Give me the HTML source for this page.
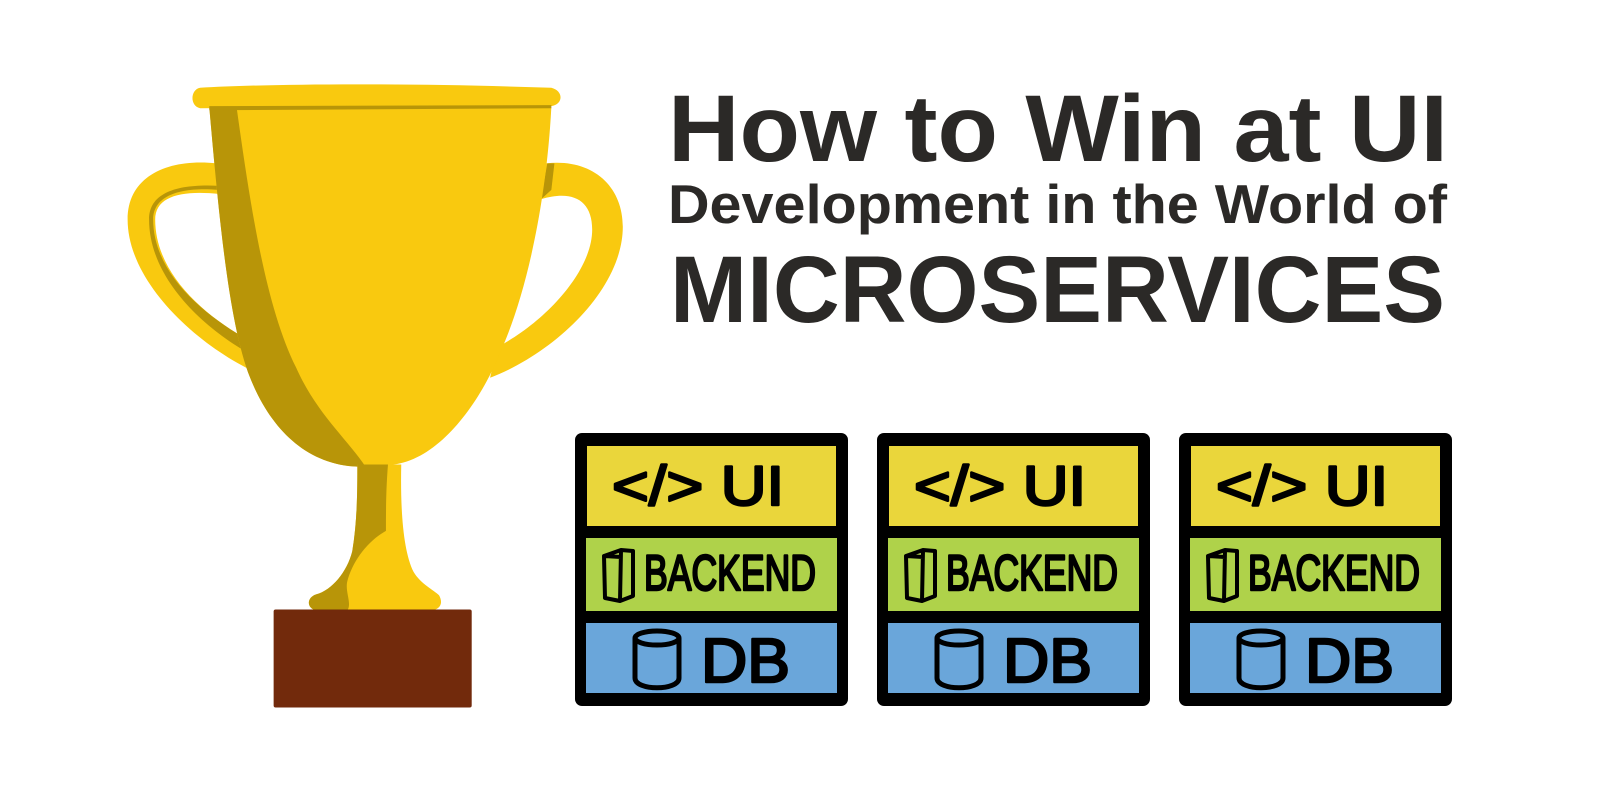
<!DOCTYPE html>
<html><head><meta charset="utf-8"><style>
html,body{margin:0;padding:0;background:#fff;width:1601px;height:801px;overflow:hidden}
svg{display:block}
</style></head><body>
<svg width="1601" height="801" viewBox="0 0 1601 801" xmlns="http://www.w3.org/2000/svg">
<g transform="scale(1.021)">
<!-- handles -->
<path d="M212,160 C165,155 125,172 125,215 C125,275 190,335 245,362 L238,330 C195,305 152,265 152,215 C152,192 178,186 215,190 Z" fill="#f9c90f"/>
<path d="M214,186 C180,183 150,190 150,215 C150,265 195,305 238,330 L242,345 C195,318 146,270 146,215 C146,188 175,180 214,182 Z" fill="#b89508"/>
<path d="M535,160 C580,155 610,182 610,222 C610,282 545,345 480,370 L487,340 C535,315 580,265 580,225 C580,195 560,186 530,195 Z" fill="#f9c90f"/>
<path d="M536,160 L543,160 L540,186 L530,195 Z" fill="#b89508"/>
<!-- cup -->
<path d="M205,105 L540,105 C535,200 515,290 490,345 C470,395 430,450 385,455 L350,457 C300,455 265,420 245,370 C225,320 215,220 205,105 Z" fill="#f9c90f"/>
<path d="M205,105 L232,107 C245,200 260,300 290,360 C310,405 340,430 358,457 L350,457 C300,455 265,420 245,370 C225,320 215,220 205,105 Z" fill="#b89508"/>
<!-- rim -->
<path d="M196,86 C260,82 400,81 540,86 C552,89 552,102 540,104 L196,106 C186,104 186,88 196,86 Z" fill="#f9c90f"/>
<path d="M205,104 L540,103 L540,106 L205,108 Z" fill="#b89508"/>
<!-- stem -->
<path d="M350,455 L393,455 C392,500 395,540 405,560 C412,572 425,578 430,583 C435,592 430,598 420,598 L310,598 C300,596 300,585 310,582 C325,578 340,560 345,540 C350,510 350,480 350,455 Z" fill="#f9c90f"/>
<path d="M350,455 L380,455 C378,480 378,500 378,520 C360,530 345,550 340,570 C338,580 345,592 340,598 L310,598 C300,596 300,585 310,582 C325,578 340,560 345,540 C350,510 350,480 350,455 Z" fill="#b89508"/>
<!-- base -->
<rect x="268" y="597" width="194" height="96" rx="2" fill="#722a0c"/>
</g>

<!-- boxes -->
<g id="b1" transform="translate(575,433)">
<rect x="0" y="0" width="273" height="273" rx="7" fill="#000"/>
<rect x="12" y="13" width="249" height="80" fill="#ead63b"/>
<rect x="11" y="105" width="251" height="73" fill="#afd24a"/>
<rect x="11" y="190" width="251" height="70" fill="#6aa6da"/>
<g font-family="Liberation Sans, sans-serif" fill="#000" stroke="#000" stroke-width="2.5" stroke-linejoin="round">
<text x="37" y="72" font-size="56" textLength="172" lengthAdjust="spacingAndGlyphs">&lt;/&gt; UI</text>
<text x="69" y="157" font-size="50" textLength="172" lengthAdjust="spacingAndGlyphs">BACKEND</text>
<text x="126" y="249" font-size="62" textLength="89" lengthAdjust="spacingAndGlyphs">DB</text>
</g>
<path d="M29,123 L46,117 L58,118 L58,163 L45,168 L30,165 Z M46,117 L45,168 M29,123 L46,124" fill="none" stroke="#000" stroke-width="4" stroke-linejoin="round"/>
<path d="M60,205 L60,245 C60,258 104,258 104,245 L104,205" fill="none" stroke="#000" stroke-width="5"/>
<ellipse cx="82" cy="205" rx="22" ry="7" fill="none" stroke="#000" stroke-width="5"/>
</g>
<use href="#b1" x="302" y="0"/>
<use href="#b1" x="604" y="0"/>

<!-- title -->
<g fill="#2b2927" font-family="Liberation Sans, sans-serif" font-weight="bold">
<text x="668" y="161" font-size="95" textLength="780" lengthAdjust="spacingAndGlyphs">How to Win at UI</text>
<text x="668" y="223" font-size="55" textLength="779" lengthAdjust="spacingAndGlyphs">Development in the World of</text>
<text x="670" y="322" font-size="95" textLength="775" lengthAdjust="spacingAndGlyphs">MICROSERVICES</text>
</g>
</svg>
</body></html>
